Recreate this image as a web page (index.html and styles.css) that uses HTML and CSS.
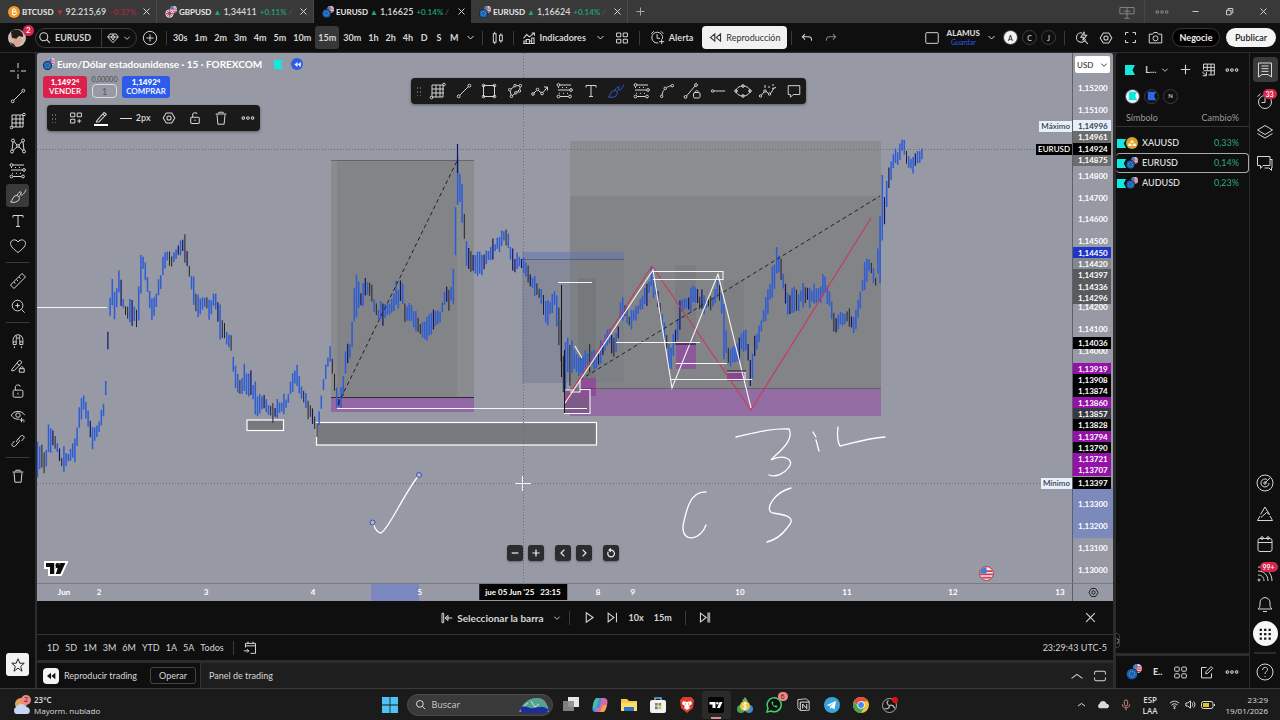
FILE: index.html
```html
<!DOCTYPE html>
<html lang="es">
<head>
<meta charset="utf-8">
<title>EURUSD · 15 · FOREXCOM</title>
<link rel="stylesheet" href="styles.css">
</head>
<body>
<svg class="sprite" aria-hidden="true">
  <defs>
    <symbol id="cross" viewBox="0 0 18 18"><path d="M9 1v5M9 12v5M1 9h5M12 9h5M8.500 9h1"/></symbol>
    <symbol id="trend" viewBox="0 0 18 18"><circle cx="3" cy="15" r="1.600"/><circle cx="15" cy="3" r="1.600"/><path d="M4.200 13.800 13.800 4.200"/></symbol>
    <symbol id="grid" viewBox="0 0 18 18"><path d="M3 3h11v12H3zM7 3v12M11 3v12M3 7h12M3 11h12"/><circle cx="2.500" cy="15.500" r="1.300"/><circle cx="15" cy="2.500" r="1.300"/></symbol>
    <symbol id="xabcd" viewBox="0 0 18 18"><circle cx="4" cy="3.500" r="1.500"/><circle cx="14" cy="3.500" r="1.500"/><circle cx="3" cy="14.500" r="1.500"/><circle cx="15" cy="14.500" r="1.500"/><circle cx="9" cy="9" r="1.300"/><path d="M4 5 3 13M14 5l1 8M5 4.500l3 3.500M13 4.500 10 8M4 13.500l4-3.500M14 13.500 10 10"/></symbol>
    <symbol id="fib" viewBox="0 0 18 18"><circle cx="2.500" cy="3" r="1.400"/><circle cx="15" cy="8" r="1.400"/><circle cx="2.500" cy="14.500" r="1.400"/><circle cx="14" cy="14.500" r="1.400"/><path d="M4 3h11M2 8h11.500M4 14.500h8.500M2 5.500h1M6 5.500h1M10 5.500h1M3 11.300h1M7 11.300h1M11 11.300h1"/></symbol>
    <symbol id="brush" viewBox="0 0 18 18"><path d="M1.500 15c2-1 2-6 5.500-6.500 2.500 0 4 2 3 4C9 15 5 16 1.500 15zM8 8.500C9 5 13 3.500 12 6c-.5 2-2 3.500-2 4M12 8c2 .5 4-3 5-5.500"/></symbol>
    <symbol id="tee" viewBox="0 0 18 18"><path d="M4 5.500V3.500h10v2M9 3.500v11M7 14.500h4"/></symbol>
    <symbol id="heart" viewBox="0 0 18 18"><path d="M9 15.500C5 12.500 1.500 9.500 1.500 6.500 1.500 2.500 7 1.500 9 5c2-3.500 7.500-2.500 7.500 1.500 0 3-3.500 6-7.500 9z"/></symbol>
    <symbol id="ruler" viewBox="0 0 18 18"><path d="M1.500 13 13 1.500 16.500 5 5 16.500zM5 10l1.500 1.500M7.500 7.500 9 9M10 5l1.500 1.500"/></symbol>
    <symbol id="zoomin" viewBox="0 0 18 18"><circle cx="8.500" cy="8.500" r="6"/><path d="M13 13l3.500 3.500M8.500 6v5M6 8.500h5"/></symbol>
    <symbol id="magnet" viewBox="0 0 18 18"><path d="M3.500 13V7.500a5.500 5.500 0 0 1 11 0V13h-3.500V7.500a2 2 0 0 0-4 0V13zM3.500 10H7M11 10h3.500M5 15v2M13 15v2M7 6V3M11 6V3"/></symbol>
    <symbol id="penlock" viewBox="0 0 18 18"><path d="M2 13 10 3c1-1 4 1 3 2.500L5 14l-3 .5zM8 6l3 2.500M10.500 12h5.500v4h-5.500zM11.500 12c0-3 3.500-3 3.500 0"/></symbol>
    <symbol id="lock" viewBox="0 0 18 18"><rect x="3.500" y="8" width="11" height="8" rx="1.500"/><path d="M6 8V4.500c0-3 5.500-3 5.500-.5M9 11v2"/></symbol>
    <symbol id="eye" viewBox="0 0 18 18"><path d="M1.500 8c3-5.500 12-5.500 15 0M1.500 8c2 4 6 5 9 4.500"/><circle cx="9" cy="8" r="2.500"/><path d="M13 11v5M11 13.500h5M15 16l1.500-1.500"/></symbol>
    <symbol id="link" viewBox="0 0 18 18"><path d="M8 10.500c-1-1-.5-2 0-2.500l4-4.500c2-2 5 .5 3.500 2.500L13 9M10 7.500c1 1 .5 2 0 2.500l-4 4.500c-2 2-5-.5-3.500-2.500L5 9"/></symbol>
    <symbol id="trash" viewBox="0 0 18 18"><path d="M3 4.500h12M6.500 4V2.500h5V4M4.500 5l1 11h7l1-11"/></symbol>
    <symbol id="star" viewBox="0 0 18 18"><path d="M9 2l2 5h5l-4 3.500L13.500 16 9 12.500 4.500 16 6 10.500 2 7h5z"/></symbol>
    <symbol id="search" viewBox="0 0 18 18"><circle cx="8" cy="8" r="5.500"/><path d="M12 12l4.500 4.500"/></symbol>
    <symbol id="diamond" viewBox="0 0 18 18"><path d="M4.500 3h9L17 7.500 9 16 1 7.500zM1 7.500h16M6.500 7.500 9 4l2.500 3.500L9 12z"/></symbol>
    <symbol id="chev" viewBox="0 0 18 18"><path d="M3 6l6 6 6-6"/></symbol>
    <symbol id="chevup" viewBox="0 0 18 18"><path d="M2 12l7-5 7 5"/></symbol>
    <symbol id="plusc" viewBox="0 0 18 18"><circle cx="9" cy="9" r="7.500"/><path d="M9 5v8M5 9h8"/></symbol>
    <symbol id="plus" viewBox="0 0 18 18"><path d="M9 2.500v13M2.500 9h13"/></symbol>
    <symbol id="minus" viewBox="0 0 18 18"><path d="M3 9h12"/></symbol>
    <symbol id="close" viewBox="0 0 18 18"><path d="M3 3l12 12M15 3 3 15"/></symbol>
    <symbol id="candles" viewBox="0 0 18 18"><path d="M3 3.500h3.500v11H3zM4.700 1v2.500M4.700 14.500V17M11 5.500h3.500v7H11zM12.700 3v2.500M12.700 12.500V15"/></symbol>
    <symbol id="indic" viewBox="0 0 18 18"><path d="M2 9.500l4-5 3.500 3L16 2.500M12.500 2.500H16V6M2.500 16v-3h3v3M5.500 16v-5h4v5M9.500 16v-3h3v3M12.500 16V9h3v7M1.500 16h15"/></symbol>
    <symbol id="squares" viewBox="0 0 18 18"><rect x="2" y="2.500" width="5.500" height="5" rx="1"/><rect x="10.500" y="2.500" width="5.500" height="5" rx="1"/><rect x="2" y="10.500" width="5.500" height="5" rx="1"/><rect x="10.500" y="10.500" width="5.500" height="5" rx="1"/></symbol>
    <symbol id="template" viewBox="0 0 18 18"><rect x="2" y="2.500" width="5.500" height="5" rx="1"/><rect x="10.500" y="2.500" width="5.500" height="5" rx="1"/><rect x="2" y="10.500" width="5.500" height="5" rx="1"/><path d="M13.200 10.500v5M10.700 13h5"/></symbol>
    <symbol id="alarm" viewBox="0 0 18 18"><path d="M10 15.500a6.500 6.500 0 1 1 5-5M8.500 5v5H12M1.500 4.500l3-3M13 1.500l3 3M14 11v6M11 14h6"/></symbol>
    <symbol id="rewind" viewBox="0 0 18 18"><path d="M8 4 2 9l6 5zM16 4l-6 5 6 5z"/></symbol>
    <symbol id="undo" viewBox="0 0 18 18"><path d="M6.500 4 3 7.500 6.500 11M3 7.500h8c3 0 4 2 4 5"/></symbol>
    <symbol id="redo" viewBox="0 0 18 18"><path d="M11.500 4 15 7.500 11.500 11M15 7.500H7c-3 0-4 2-4 5"/></symbol>
    <symbol id="box" viewBox="0 0 18 18"><rect x="2" y="3" width="14" height="12" rx="1"/></symbol>
    <symbol id="maxi" viewBox="0 0 18 18"><path d="M2 7V5q0-2 2-2h10q2 0 2 2v2M2 11v2q0 2 2 2h10q2 0 2-2v-2"/></symbol>
    <symbol id="flash" viewBox="0 0 18 18"><path d="M9 2.500a6 6 0 1 0 4.500 8M12.500 12.500l4 4M12 1 7.500 8H11l-1 4 5-6.500h-3.500z"/></symbol>
    <symbol id="gear" viewBox="0 0 18 18"><path d="M5.500 2.500h7L16.500 9l-4 6.500h-7L1.500 9z"/><circle cx="9" cy="9" r="2.700"/></symbol>
    <symbol id="full" viewBox="0 0 18 18"><path d="M3 6V3h3.500M11.500 3H15v3M15 12v3h-3.500M6.500 15H3v-3"/></symbol>
    <symbol id="camera" viewBox="0 0 18 18"><path d="M1.500 5h4L7 3h4l1.500 2h4v10.500h-15z"/><circle cx="9" cy="10" r="3"/></symbol>
    <symbol id="dots" viewBox="0 0 18 18"><circle cx="3" cy="9" r="1.700"/><circle cx="9" cy="9" r="1.700"/><circle cx="15" cy="9" r="1.700"/></symbol>
    <symbol id="pencil" viewBox="0 0 18 18"><path d="M3.500 14 13 3l3 2.500L6.500 15l-3.500.5zM11 5l3 3"/></symbol>
    <symbol id="rect" viewBox="0 0 18 18"><path d="M3.500 3.500h11v11h-11z"/><circle cx="3.500" cy="3.500" r="1.300"/><circle cx="14.500" cy="3.500" r="1.300"/><circle cx="3.500" cy="14.500" r="1.300"/><circle cx="14.500" cy="14.500" r="1.300"/></symbol>
    <symbol id="path" viewBox="0 0 18 18"><circle cx="9" cy="3" r="1.400"/><circle cx="15" cy="3" r="1.400"/><circle cx="3" cy="7.500" r="1.400"/><circle cx="14" cy="9" r="1.400"/><circle cx="5" cy="15" r="1.400"/><circle cx="10" cy="11" r="1.400"/><path d="M10.500 3H13.500M8 4 4.500 6.800M3.500 9l1.200 4.500M6 14l3-2M11.300 10.500l1.500-1M14.300 7.500l.5-3"/></symbol>
    <symbol id="zig" viewBox="0 0 18 18"><circle cx="2" cy="12" r="1.300"/><circle cx="6.500" cy="7.500" r="1.300"/><circle cx="11" cy="11.500" r="1.300"/><path d="M3 11l2.500-2.500M7.500 8.500l2.500 2M12 10.500 16.500 5M13 5h3.500v3.500"/></symbol>
    <symbol id="curve" viewBox="0 0 18 18"><circle cx="3" cy="15" r="1.400"/><circle cx="7" cy="6" r="1.400"/><circle cx="15" cy="3" r="1.400"/><path d="M3.500 13.500C4 10 5 8.500 6.300 7.300M8.500 5.300C10 4 12 3.500 13.500 3.200"/></symbol>
    <symbol id="trlock" viewBox="0 0 18 18"><circle cx="2.500" cy="15" r="1.400"/><circle cx="13" cy="3" r="1.400"/><path d="M3.500 14 12 4"/><rect x="10.500" y="10.500" width="6.500" height="5.500" rx="1.500"/><path d="M12 10.500c0-2.500 3.500-2.500 3.500 0"/></symbol>
    <symbol id="hray" viewBox="0 0 18 18"><circle cx="3" cy="9" r="1.400"/><path d="M4.500 9H17"/></symbol>
    <symbol id="ellipse" viewBox="0 0 18 18"><ellipse cx="9" cy="9" rx="7" ry="5"/><circle cx="2" cy="9" r="1.300"/><circle cx="16" cy="9" r="1.300"/><circle cx="9" cy="4" r="1.300"/><circle cx="9" cy="14" r="1.300"/></symbol>
    <symbol id="elliott" viewBox="0 0 18 18"><circle cx="1.500" cy="14" r="1.200"/><circle cx="6" cy="9" r="1.200"/><circle cx="10.500" cy="12" r="1.200"/><path d="M2.500 13 5 10M7 9.500l2.500 2M11.500 11.500 15 6M13 6.500l4-1M6 3v3M10 4v2M14 2v2"/></symbol>
    <symbol id="note" viewBox="0 0 18 18"><path d="M2.500 3h13v10H8l-3 3v-3H2.500z"/></symbol>
    <symbol id="calgo" viewBox="0 0 18 18"><path d="M3 9V4h12v12H9M3 7h12M6 2v3M12 2v3M1 13h6M5 11l2 2-2 2"/></symbol>
    <symbol id="cal" viewBox="0 0 18 18"><rect x="2" y="3.500" width="14" height="13" rx="2"/><path d="M2 7.500h14"/><circle cx="6" cy="3" r="1.300"/><circle cx="12" cy="3" r="1.300"/></symbol>
    <symbol id="play" viewBox="0 0 18 18"><path d="M4.500 2.500 14 9l-9.500 6.500z"/></symbol>
    <symbol id="step" viewBox="0 0 18 18"><path d="M3 3l8 6-8 6zM14.500 2.500v13"/></symbol>
    <symbol id="toend" viewBox="0 0 18 18"><path d="M2 3l8 6-8 6z"/><path class="solid" d="M11.500 2h4v14h-4z" opacity=".7"/></symbol>
    <symbol id="barsel" viewBox="0 0 18 18"><path d="M1.500 2h2.500v14H1.500zM6 9h11M10.500 5 6 9l4.500 4z"/></symbol>
    <symbol id="back" viewBox="0 0 18 18"><path d="M11.500 3 5.500 9l6 6"/></symbol>
    <symbol id="fwd" viewBox="0 0 18 18"><path d="M6.500 3l6 6-6 6"/></symbol>
    <symbol id="reset" viewBox="0 0 18 18"><path d="M4 7a6 6 0 1 0 5-3H5.500M8.500 1 5.500 4l3 3"/></symbol>
    <symbol id="list" viewBox="0 0 18 18"><path d="M2.500 2h13v14L12 13.500H6L2.500 16zM5.500 5h7M5.500 7.700h7M5.500 10.400h7"/></symbol>
    <symbol id="clock" viewBox="0 0 18 18"><circle cx="9" cy="10" r="6.500"/><path d="M9 6v4.500H5.500M1.500 4.500l3-2.500M13.500 2l3 2.500"/></symbol>
    <symbol id="layers" viewBox="0 0 18 18"><path d="M9 2.500 16.500 7 9 11.500 1.500 7zM1.500 10.500 9 15l7.500-4.500"/></symbol>
    <symbol id="chat" viewBox="0 0 18 18"><path d="M1.500 2.500h12.500v9H7l-2.500 3v-3h-3zM16 6v8h-.5v2.500L13 14H8.500M14 5.500h2.500"/></symbol>
    <symbol id="radar" viewBox="0 0 18 18"><circle cx="9" cy="9" r="8"/><path d="M13 9a4 4 0 1 1-2-3.500M9 9l5.500-5.500"/><circle cx="9" cy="9" r="1.200"/></symbol>
    <symbol id="hill" viewBox="0 0 18 18"><path d="M9 2l4.500 7.500-3-2L5 12.500M9 2 4.500 9.500M1.500 15.500h15l-2.500-4.500M1.500 15.500 4 11"/></symbol>
    <symbol id="feed" viewBox="0 0 18 18"><circle cx="3" cy="15" r="1"/><path d="M2 10c4 0 6 2.500 6 6M2 6c6 0 10 4 10 10M2 2c8 0 14 6 14 14"/></symbol>
    <symbol id="bell" viewBox="0 0 18 18"><path d="M2 14c2-1.500 2-3 2-6 0-3.500 2-5 5-5.500 3 .5 5 2 5 5.500 0 3 0 4.500 2 6zM7 16.500h4"/></symbol>
    <symbol id="help" viewBox="0 0 18 18"><circle cx="9" cy="9" r="8"/><path d="M6.500 7c0-3.500 5-3.500 5-.5 0 2-2.500 2-2.500 4.500M9 13v1"/></symbol>
    <symbol id="apps" viewBox="0 0 18 18"><path class="solid" d="M3 3h2.500v2.500H3zM8 3h2.500v2.500H8zM13 3h2.500v2.500H13zM3 8h2.500v2.500H3zM8 8h2.500v2.500H8zM13 8h2.500v2.500H13zM3 13h2.500v2.500H3zM8 13h2.500v2.500H8zM13 13h2.500v2.500H13z"/></symbol>
    <symbol id="table" viewBox="0 0 18 18"><path d="M3 9V2.500h13v13H9M3 6.500h13M3 10.500h13M7.500 2.500v8M12 2.500v13M6.500 12v4.500H2M1.500 12l5 4.500"/></symbol>
    <symbol id="edit" viewBox="0 0 18 18"><path d="M9 3H3v12.500h12V10M8 10.500l.5-2.500 6-6 2 2-6 6z"/></symbol>
    <symbol id="screens" viewBox="0 0 18 18"><path d="M1 4h16v7H1zM9 4v12M5 8h8M6 16h6"/></symbol>
    <symbol id="restore" viewBox="0 0 18 18"><path d="M3 6.500h9v9H3zM6 6V3h9.500v9H12"/></symbol>
    <symbol id="wifi" viewBox="0 0 18 18"><path d="M1.500 7c4-4.500 11-4.500 15 0M4 10c3-3 7-3 10 0M6.500 12.500c1.500-1.500 3.500-1.500 5 0"/><circle cx="9" cy="15" r="1"/></symbol>
    <symbol id="sound" viewBox="0 0 18 18"><path d="M1.500 6.500h3L9 3v12l-4.500-3.500h-3zM11.500 6c1.500 2 1.500 4 0 6M14 4c3 3 3 7 0 10"/></symbol>
    <symbol id="mic" viewBox="0 0 18 18"><rect x="6.500" y="1.500" width="5" height="9" rx="2.500"/><path d="M3.500 8c0 7 11 7 11 0M9 13.500V17"/></symbol>
    <symbol id="flag" viewBox="0 0 12 12"><path class="solid" d="M1 1h10L8.500 6 11 11H1z"/></symbol>
    <symbol id="rr" viewBox="0 0 18 18"><path class="solid" d="M9 4v10L3 9zM15.500 4v10l-6-5z"/></symbol>
    <symbol id="us" viewBox="0 0 16 16"><circle cx="8" cy="8" r="8" fill="#f2e9ec" stroke="none"/><path d="M1 5h14M0 9h16M2 13h12" stroke="#d33c52" stroke-width="2"/><path d="M8 0v8H0C0 3 4 0 8 0z" fill="#3f7ec9" stroke="none"/></symbol>
    <symbol id="pair" viewBox="0 0 16 16"><use href="#us" x="7" y="0" width="9" height="9"/><circle cx="6" cy="10" r="6" fill="#101418" stroke="none"/><circle cx="6" cy="10" r="5.300" fill="#1b62ae" stroke="none"/><circle cx="6" cy="10" r="2.800" stroke="#7fb8e8" stroke-dasharray="1 1.200"/></symbol>
    <symbol id="gbp" viewBox="0 0 16 16"><use href="#us" x="7" y="0" width="9" height="9"/><circle cx="6" cy="10" r="5.500" fill="#e8dfe6" stroke="none"/><path d="M6 5v10M1 10h10" stroke="#d83a50" stroke-width="2"/><path d="M2.500 6.500l7 7M9.500 6.500l-7 7" stroke="#3a68b0"/></symbol>
  </defs>
</svg>

<header class="tabs" role="tablist">
  <div class="tab"><svg class="coin" viewBox="0 0 16 16"><circle cx="8" cy="8" r="8" fill="#f09a2a"/><path d="M6 4v8M6 4.500h3c2 0 2 3 0 3H6h3.500c2.500 0 2.500 4 0 4H6M8 3v1M8 12v1" fill="none" stroke="#fff" stroke-width="1.300"/></svg><button class="tab-name" role="tab">BTCUSD</button><span class="down">▼</span><span>92.215,69</span><span class="chg neg">−0.37%</span><button class="x" aria-label="Cerrar"><svg class="i9"><use href="#close"/></svg></button></div>
  <div class="tab"><svg class="coin"><use href="#gbp"/></svg><button class="tab-name" role="tab">GBPUSD</button><span class="up">▲</span><span>1,34411</span><span class="chg pos">+0.11% <i>/</i></span><button class="x" aria-label="Cerrar"><svg class="i9"><use href="#close"/></svg></button></div>
  <div class="tab active"><svg class="coin"><use href="#pair"/></svg><button class="tab-name" role="tab" aria-selected="true">EURUSD</button><span class="up">▲</span><span>1,16625</span><span class="chg pos">+0.14% <i>/</i></span><button class="x" aria-label="Cerrar"><svg class="i9"><use href="#close"/></svg></button></div>
  <div class="tab"><svg class="coin"><use href="#pair"/></svg><button class="tab-name" role="tab">EURUSD</button><span class="up">▲</span><span>1,16624</span><span class="chg pos">+0.14% <i>/</i></span><button class="x" aria-label="Cerrar"><svg class="i9"><use href="#close"/></svg></button></div>
  <button class="newtab" aria-label="Nueva pestaña"><svg class="i11"><use href="#plus"/></svg></button>
  <div class="win">
    <button class="dim" aria-label="Pantallas"><svg class="i16"><use href="#screens"/></svg></button>
    <button class="dim edge" aria-label="Más"><svg class="i14"><use href="#dots"/></svg></button>
    <button aria-label="Minimizar"><svg class="i9"><use href="#minus"/></svg></button>
    <button aria-label="Restaurar"><svg class="i9"><use href="#restore"/></svg></button>
    <button aria-label="Cerrar ventana"><svg class="i9"><use href="#close"/></svg></button>
  </div>
</header>

<nav class="topbar">
  <button class="avatar" aria-label="Perfil"><svg viewBox="0 0 18 18"><circle cx="9" cy="9" r="9" fill="#c9bdb4"/><path d="M3 3c4-5 13-2 12 5l-4-1-3 3-4-1z" fill="#241c1a"/><path d="M5 9l4 1 3-2 2 4-4 5-5-2z" fill="#d9a58c"/><path d="M2 13l4 2 2 3-4-1z" fill="#402a26"/></svg><span class="badge">2</span></button>
  <div class="pill"><button class="sym"><svg class="i13"><use href="#search"/></svg>EURUSD</button><button class="src" aria-label="Fuente"><svg class="i12"><use href="#diamond"/></svg><svg class="i7"><use href="#chev"/></svg></button></div>
  <button class="tool" aria-label="Comparar"><svg class="i16"><use href="#plusc"/></svg></button>
  <span class="sep"></span>
  <div class="frames"><button>30s</button><button>1m</button><button>2m</button><button>3m</button><button>4m</button><button>5m</button><button>10m</button><button class="on">15m</button><button>30m</button><button>1h</button><button>2h</button><button>4h</button><button>D</button><button>S</button><button>M</button><button aria-label="Más intervalos"><svg class="i8"><use href="#chev"/></svg></button></div>
  <span class="sep"></span>
  <button class="tool" aria-label="Velas"><svg class="i14"><use href="#candles"/></svg></button>
  <span class="sep"></span>
  <button class="tool wide"><svg class="i14"><use href="#indic"/></svg>Indicadores</button>
  <button class="tool" aria-label="Favoritos"><svg class="i8"><use href="#chev"/></svg></button>
  <button class="tool" aria-label="Plantillas"><svg class="i14"><use href="#squares"/></svg></button>
  <span class="sep wider"></span>
  <button class="tool wide"><svg class="i15"><use href="#alarm"/></svg>Alerta</button>
  <button class="replay"><svg class="i13"><use href="#rewind"/></svg>Reproducción</button>
  <span class="sep"></span>
  <button class="tool" aria-label="Deshacer"><svg class="i14"><use href="#undo"/></svg></button>
  <button class="tool dim" aria-label="Rehacer"><svg class="i14"><use href="#redo"/></svg></button>
  <div class="right">
    <button class="tool" aria-label="Diseño"><svg class="i16"><use href="#box"/></svg></button>
    <button class="layout"><b>ALAMUS</b><span>Guardar</span></button>
    <button class="tool" aria-label="Diseños"><svg class="i8"><use href="#chev"/></svg></button>
    <button class="round lit">A</button><button class="round">C</button><button class="round">J</button>
    <span class="sep"></span>
    <button class="tool" aria-label="Búsqueda rápida"><svg class="i14"><use href="#flash"/></svg></button>
    <button class="tool" aria-label="Ajustes"><svg class="i14"><use href="#gear"/></svg></button>
    <button class="tool" aria-label="Pantalla completa"><svg class="i15"><use href="#full"/></svg></button>
    <button class="tool" aria-label="Captura"><svg class="i15"><use href="#camera"/></svg></button>
    <button class="cta dark">Negocie</button>
    <button class="cta">Publicar</button>
  </div>
</nav>

<div class="workspace">
  <aside class="tools">
    <button aria-label="Cruz"><svg class="i18"><use href="#cross"/></svg></button>
    <button aria-label="Línea"><svg class="i16"><use href="#trend"/></svg></button>
    <button aria-label="Gann"><svg class="i18"><use href="#grid"/></svg></button>
    <button aria-label="Patrones"><svg class="i18"><use href="#xabcd"/></svg></button>
    <button aria-label="Fibonacci"><svg class="i18"><use href="#fib"/></svg></button>
    <button class="on" aria-label="Pincel"><svg class="i18"><use href="#brush"/></svg></button>
    <button aria-label="Texto"><svg class="i18"><use href="#tee"/></svg></button>
    <button aria-label="Iconos"><svg class="i18"><use href="#heart"/></svg></button>
    <hr>
    <button aria-label="Regla"><svg class="i18"><use href="#ruler"/></svg></button>
    <button aria-label="Acercar"><svg class="i16"><use href="#zoomin"/></svg></button>
    <hr>
    <button aria-label="Imán"><svg class="i16"><use href="#magnet"/></svg></button>
    <button aria-label="Modo dibujo"><svg class="i16"><use href="#penlock"/></svg></button>
    <button aria-label="Bloquear"><svg class="i16"><use href="#lock"/></svg></button>
    <button aria-label="Ocultar"><svg class="i16"><use href="#eye"/></svg></button>
    <button aria-label="Vincular"><svg class="i16"><use href="#link"/></svg></button>
    <hr>
    <button aria-label="Eliminar"><svg class="i16"><use href="#trash"/></svg></button>
    <button class="fav" aria-label="Barra de favoritos"><svg class="i16"><use href="#star"/></svg></button>
  </aside>

  <main class="center">
    <section class="chart">
      <div class="canvas">
        <svg class="plot" viewBox="37 53 1035 530" preserveAspectRatio="none">
          <g class="zones">
            <rect x="331" y="160" width="143" height="237" fill="#8a8c90"/>
            <rect x="337" y="160" width="120" height="237" fill="#828487"/>
            <rect x="331" y="397" width="143" height="15" fill="#9468a4"/>
            <rect x="522" y="260" width="102" height="123" fill="#868999"/>
            <rect x="570" y="141" width="311" height="55" fill="#8b8d91"/>
            <rect x="570" y="196" width="311" height="193" fill="#828487"/>
            <rect x="522" y="252" width="102" height="8" fill="#5d72b4" opacity=".5"/>
            <rect x="570" y="260" width="54" height="123" fill="#7d8085"/>
            <rect x="578" y="278" width="18" height="105" fill="#76797c"/>
            <rect x="675" y="265" width="21" height="78" fill="#7b7d80"/>
            <rect x="724" y="280" width="20" height="95" fill="#7d7f83"/>
            <rect x="570" y="389" width="311" height="27" fill="#936ca3"/>
            <rect x="564" y="390" width="26" height="24" fill="#7f5a89"/>
            <rect x="580" y="378" width="16" height="18" fill="#8e4f96"/>
            <rect x="676" y="343" width="20" height="26" fill="#8d579b"/>
            <rect x="727" y="371" width="18" height="10" fill="#86478c"/>
            <path class="dark" d="M331 160.500h143M522 259.500h102M570 388.500h311" opacity=".3"/>
            <path class="dark" d="M331 397.500h143" opacity=".8"/>
            <rect class="out" x="316.500" y="422.500" width="280" height="22.500" fill="#797a80"/>
            <rect class="out" x="247" y="420" width="36.500" height="10.500" fill="#77787d"/>
          </g>
          <path class="dotted" d="M37 149.500h1035M37 483.500h1035M523.500 53v530"/>
          <g id="bars"></g>
          <path class="navy" d="M457.500 144v29"/>
          <path class="dash" d="M338 404 457 161M580 380 880 196"/>
          <path class="rose" d="M565 401 652 266 751 410 871 218"/>
          <path class="white" d="M37 307.500h70M337 408.500h250M558 282.500h34M616 342.500h84M676 363.500h51M670 379.500h82M564 413.500h26v-24h-10M564 390h10M652 271.500h71v8h-70M580 380v12h-10M727 372h18v8"/>
          <path class="white" d="M565 403 653 270 672 388 718 274 751 408M575 346l7 12"/>
          <path class="dark" d="M561.500 285v92M564.500 350v63M675 344h21M727 371h19"/>
          <g class="ink">
            <path d="M373 523c2 6 4 10 8 10 8-4 22-38 38-58"/>
            <path d="M736 437c18-4 35-9 53-8 6 12-12 24-18 31 12-6 24-1 18 7-4 6-13 11-20 8"/>
            <path d="M813 432l3 5M816 440l3 11M838 427c-1 8-1 14 2 19 10-2 27-8 45-9"/>
            <path d="M706 492c-16-1-20 19-23 34-1 18 18 14 23-1M791 488c-16 4-28 22-18 25 15 2 24 5 14 15-5 7-12 12-20 14"/>
          </g>
          <path class="white" d="M522.500 476v15M515 483.500h16"/>
          <g class="handles"><circle cx="372.500" cy="522.500" r="2.500"/><circle cx="419" cy="475" r="2.500"/></g>
        </svg>

        <div class="legend">
          <div class="title"><svg class="coin"><use href="#pair"/></svg><h1>Euro/Dólar estadounidense · 15 · FOREXCOM</h1><svg class="cyan i11"><use href="#flag"/></svg><span class="rw"><svg class="i9"><use href="#rr"/></svg></span></div>
          <div class="trade">
            <button class="sell"><b>1,1492<sup>4</sup></b>VENDER</button>
            <label class="lot"><span>0,00000</span><input value="1" aria-label="Lotes"></label>
            <button class="buy"><b>1,1492<sup>4</sup></b>COMPRAR</button>
          </div>
          <div class="float style-bar">
            <span class="grip"></span>
            <button aria-label="Plantilla"><svg class="i14"><use href="#template"/></svg></button>
            <button class="color" aria-label="Color"><svg class="i14"><use href="#pencil"/></svg></button>
            <button class="px"><i></i>2px</button>
            <button aria-label="Configuración"><svg class="i14"><use href="#gear"/></svg></button>
            <button aria-label="Bloquear"><svg class="i14"><use href="#lock"/></svg></button>
            <button aria-label="Eliminar"><svg class="i16"><use href="#trash"/></svg></button>
            <button aria-label="Más"><svg class="i14"><use href="#dots"/></svg></button>
          </div>
        </div>

        <div class="float fav-bar">
          <span class="grip"></span>
          <button aria-label="Gann"><svg class="i18"><use href="#grid"/></svg></button>
          <button aria-label="Línea"><svg class="i16"><use href="#trend"/></svg></button>
          <button aria-label="Rectángulo"><svg class="i18"><use href="#rect"/></svg></button>
          <button aria-label="Trazado"><svg class="i16"><use href="#path"/></svg></button>
          <button aria-label="Polilínea"><svg class="i18"><use href="#zig"/></svg></button>
          <button aria-label="Fibonacci"><svg class="i18"><use href="#fib"/></svg></button>
          <button aria-label="Texto"><svg class="i18"><use href="#tee"/></svg></button>
          <button class="blue" aria-label="Pincel"><svg class="i18"><use href="#brush"/></svg></button>
          <button aria-label="Extensión"><svg class="i18"><use href="#fib"/></svg></button>
          <button aria-label="Curva"><svg class="i16"><use href="#curve"/></svg></button>
          <button aria-label="Información"><svg class="i18"><use href="#trlock"/></svg></button>
          <button aria-label="Rayo"><svg class="i16"><use href="#hray"/></svg></button>
          <button aria-label="Elipse"><svg class="i18"><use href="#ellipse"/></svg></button>
          <button aria-label="Elliott"><svg class="i18"><use href="#elliott"/></svg></button>
          <button aria-label="Nota"><svg class="i16"><use href="#note"/></svg></button>
        </div>

        <div class="steer">
          <button aria-label="Alejar"><svg class="i10"><use href="#minus"/></svg></button><button aria-label="Acercar"><svg class="i10"><use href="#plus"/></svg></button>
          <button class="gap" aria-label="Atrás"><svg class="i10"><use href="#back"/></svg></button><button aria-label="Adelante"><svg class="i10"><use href="#fwd"/></svg></button>
          <button class="gap" aria-label="Restablecer"><svg class="i10"><use href="#reset"/></svg></button>
        </div>
        <svg class="logo" viewBox="0 0 24 15"><path d="M1 1h22l-6 13H5V7H1z" fill="#0b0b0b" stroke="#fff" stroke-width="2"/><path d="M11 1v13M11.500 3h4M13 7l-2 6" stroke="#fff" stroke-width="1.500" fill="none"/><circle cx="13.500" cy="4" r="2" fill="#0b0b0b"/></svg>
        <svg class="event"><use href="#us"/></svg>
        <div class="side-tags" id="tags"></div>
      </div>
      <div class="prices"><div class="currency"><select aria-label="Moneda"><option>USD</option></select><svg class="i7"><use href="#chev"/></svg></div><div id="prices"></div></div>
      <div class="times" id="times"></div>
      <button class="axis-gear" aria-label="Ajustes de escala"><svg class="i11"><use href="#gear"/></svg></button>
    </section>

    <section class="replay-bar">
      <div class="group">
        <button class="pick"><svg class="i12"><use href="#barsel"/></svg>Seleccionar la barra<svg class="i7 late"><use href="#chev"/></svg></button>
        <span class="sep"></span>
        <button aria-label="Reproducir"><svg class="i13"><use href="#play"/></svg></button>
        <button aria-label="Avanzar"><svg class="i13"><use href="#step"/></svg></button>
        <button>10x</button><button>15m</button>
        <span class="sep"></span>
        <button aria-label="Ir al final"><svg class="i13"><use href="#toend"/></svg></button>
      </div>
      <button class="quit" aria-label="Salir"><svg class="i13"><use href="#close"/></svg></button>
    </section>

    <section class="ranges">
      <button>1D</button><button>5D</button><button>1M</button><button>3M</button><button>6M</button><button>YTD</button><button>1A</button><button>5A</button><button>Todos</button>
      <span class="sep"></span>
      <button aria-label="Ir a fecha"><svg class="i15"><use href="#calgo"/></svg></button>
      <time>23:29:43 UTC-5</time>
    </section>

    <section class="bottom">
      <div class="rep"><span class="rep-ico"><svg class="i12"><use href="#rr"/></svg></span>Reproducir trading<button class="operar">Operar</button></div>
      <button class="panel-name">Panel de trading</button>
      <div class="bottom-right"><button aria-label="Desplegar"><svg class="i14"><use href="#chevup"/></svg></button><button aria-label="Maximizar"><svg class="i14"><use href="#maxi"/></svg></button></div>
    </section>
  </main>

  <aside class="watch">
    <div class="watch-head"><svg class="cyan i12"><use href="#flag"/></svg><button class="list-name">L...<svg class="i7"><use href="#chev"/></svg></button><button aria-label="Añadir"><svg class="i13"><use href="#plus"/></svg></button><button aria-label="Tabla"><svg class="i15"><use href="#table"/></svg></button><button aria-label="Más"><svg class="i14"><use href="#dots"/></svg></button></div>
    <div class="chips"><button class="lit" aria-label="Lista celeste"><svg class="cyan i10"><use href="#flag"/></svg></button><button aria-label="Lista azul"><svg class="azure i10"><use href="#flag"/></svg></button><button>N</button></div>
    <table>
      <thead><tr><th>Símbolo</th><th>Cambio%</th></tr></thead>
      <tbody>
        <tr><td><div class="cell"><svg class="cyan i11"><use href="#flag"/></svg><svg class="coin" viewBox="0 0 16 16"><circle cx="8" cy="8" r="8" fill="#d9a32b"/><path d="M5.500 7.500 6.500 4.500h3l1 3zM2.500 12l1-3.500h3.500l1 3.500zM8.500 12l1-3.500H13l1 3.500z" fill="#fff3cf"/></svg>XAUUSD</div></td><td>0,33%</td></tr>
        <tr class="sel"><td><div class="cell"><svg class="cyan i11"><use href="#flag"/></svg><svg class="coin"><use href="#pair"/></svg>EURUSD</div></td><td>0,14%</td></tr>
        <tr><td><div class="cell"><svg class="cyan i11"><use href="#flag"/></svg><svg class="coin"><use href="#pair"/></svg>AUDUSD</div></td><td>0,23%</td></tr>
      </tbody>
    </table>
    <div class="detail"><svg class="coin big"><use href="#pair"/></svg><b>E..</b><button aria-label="Vista"><svg class="i15"><use href="#squares"/></svg></button><button aria-label="Editar"><svg class="i15"><use href="#edit"/></svg></button><button aria-label="Más"><svg class="i14"><use href="#dots"/></svg></button></div>
    <button class="fold" aria-label="Plegar"><svg class="i7"><use href="#fwd"/></svg></button>
  </aside>

  <aside class="rail">
    <button class="on" aria-label="Lista"><svg class="i18"><use href="#list"/></svg></button>
    <button aria-label="Alertas"><svg class="i18"><use href="#clock"/></svg><span class="badge">33</span></button>
    <button aria-label="Objetos"><svg class="i18"><use href="#layers"/></svg></button>
    <button aria-label="Chats"><svg class="i18"><use href="#chat"/></svg></button>
    <button class="push" aria-label="Screener"><svg class="i18"><use href="#radar"/></svg></button>
    <button aria-label="Pine"><svg class="i18"><use href="#hill"/></svg></button>
    <button aria-label="Calendario"><svg class="i18"><use href="#cal"/></svg></button>
    <button aria-label="Noticias"><svg class="i18"><use href="#feed"/></svg><span class="badge long">99+</span></button>
    <button aria-label="Notificaciones"><svg class="i18"><use href="#bell"/></svg></button>
    <button class="apps" aria-label="Productos"><svg class="i16"><use href="#apps"/></svg></button>
    <hr>
    <button aria-label="Ayuda"><svg class="i18"><use href="#help"/></svg></button>
  </aside>
</div>

<footer class="taskbar">
  <button class="weather"><svg viewBox="0 0 20 20"><circle cx="9" cy="9" r="6" fill="#e0a25a"/><path d="M4 19a4 4 0 0 1 0-7c2-4 9-4 10 0 5 0 5 7 1 7z" fill="#c6d6f4"/><circle cx="14" cy="5" r="5" fill="#ef8585"/></svg><span class="num">2</span><span class="two"><b>23°C</b>Mayorm. nublado</span></button>
  <div class="apps-row">
    <button aria-label="Inicio"><svg viewBox="0 0 16 16"><path d="M0 0h7.600v7.600H0zM8.400 0H16v7.600H8.400zM0 8.400h7.600V16H0zM8.400 8.400H16V16H8.400z" fill="#4cc2f5"/></svg></button>
    <label class="find"><svg class="i11"><use href="#search"/></svg><input placeholder="Buscar" aria-label="Buscar"><svg class="art" viewBox="0 0 30 16"><path d="M0 15C3 7 9 1 18 1s11 8 12 14z" fill="#6c93b8"/><path d="M4 8c6-7 14-8 18-5s6 6 7 9H3z" fill="#50a58c"/><path d="M1 11c6-4 8 1 14 0s9-3 15 2l-3 3H3z" fill="#1b2e9a"/><path d="M12 4l4 6 4-3M5 9l4-3" stroke="#e7d4ee" fill="none"/></svg></label>
    <button aria-label="Vista de tareas"><svg viewBox="0 0 16 16"><rect x="5" y="0" width="11" height="10" fill="#e6e6e6"/><rect x="0" y="4" width="11" height="10" fill="#8b8b8b" opacity=".9"/></svg></button>
    <button aria-label="Copilot"><svg viewBox="0 0 16 16"><path d="M5 1h5c2 0 2 3 3 5H9L6 15H3c-3 0-3-4-2-7 1-4 2-7 4-7z" fill="#3b93e6"/><path d="M11 15H6c-2 0-2-3-3-4h4l3-10h2c4 0 4 4 3 7-1 4-2 7-4 7z" fill="#d769a8"/><path d="M1 8c1-4 2-7 4-7h2L4 11H1z" fill="#46c29a"/><path d="M11 15c2 0 3-3 4-7h-4l-3 7z" fill="#efa344"/></svg></button>
    <button aria-label="Explorador"><svg viewBox="0 0 16 16"><path d="M0 2h6l2 2h8v10H0z" fill="#f6c84c"/><path d="M0 6h16v8H0z" fill="#fbdc6f"/><path d="M3 10h10v4H3z" fill="#2c76bd"/></svg></button>
    <button aria-label="Tienda"><svg viewBox="0 0 16 16"><path d="M5 4V1h6v3" fill="none" stroke="#5cb7ec" stroke-width="1.500"/><rect y="3" width="16" height="13" rx="2" fill="#f1f1f1"/><path d="M5 6h2.700v2.700H5z" fill="#e45b3c"/><path d="M8.500 6h2.700v2.700H8.500z" fill="#5da83c"/><path d="M5 9.500h2.700v2.700H5z" fill="#2f8ad8"/><path d="M8.500 9.500h2.700v2.700H8.500z" fill="#e7b32e"/></svg></button>
    <button aria-label="Brave"><svg viewBox="0 0 16 16"><path d="M4 0h8l3 3-1 8-6 5-6-5-1-8z" fill="#e23a2b"/><path d="M4 4l4 1 4-1 1 3-3 2 1 2-3 2-3-2 1-2-3-2z" fill="#fff"/><path d="M6 7h1M9 7h1" stroke="#e23a2b"/></svg></button>
    <button class="open" aria-label="TradingView"><svg viewBox="0 0 16 16"><rect width="16" height="16" rx="2" fill="#050505"/><path d="M1.500 5h6v6H4.500V7.500h-3zM10.500 7.500l1-2.500h3l-2.700 6H9z" fill="#fff"/><circle cx="9.300" cy="6.200" r="1.200" fill="#fff"/></svg></button>
    <button aria-label="MetaTrader"><svg viewBox="0 0 16 16"><circle cx="4" cy="12" r="4" fill="#4aa35b"/><circle cx="12" cy="12" r="4" fill="#3c8dc6"/><circle cx="8" cy="9" r="5" fill="#e9c64a"/><path d="M8 0l3 4H5z" fill="#5eb35d"/><path d="M10 7c-3-2-5 1-2 2s1 4-2 2M8 5v8" stroke="#fff" fill="none"/></svg></button>
    <button class="wa" aria-label="WhatsApp"><svg viewBox="0 0 16 16"><path d="M1 15l1-4a7 7 0 1 1 3 3z" fill="#111" stroke="#3fd267" stroke-width="1.500"/><path d="M5.500 5c0 3 2.500 5.500 5.500 5.500l.5-1.500-2-.8-.8.8C7.500 8.500 7 7.500 6.800 6.800l.7-.7L7 4.500z" fill="#3fd267"/></svg><span class="num">6</span></button>
    <button aria-label="Notion"><svg class="small" viewBox="0 0 16 16"><path d="M1 2l10-1 4 3v11l-11 .5L1 12z" fill="#1a1a1a" stroke="#eee"/><path d="M4 5h11M4 5v10M7 13V7.500l5 5.500V7.500" stroke="#eee" fill="none" stroke-width="1.200"/></svg></button>
    <button aria-label="Telegram"><svg viewBox="0 0 16 16"><circle cx="8" cy="8" r="8" fill="#37a5dc"/><path d="M3 8l9-4-1.500 8.500-3-2L6 12V9.500L10 6 5 9z" fill="#fff"/></svg></button>
    <button aria-label="Chrome"><svg viewBox="0 0 16 16"><circle cx="8" cy="8" r="8" fill="#f0c340"/><path d="M1 4.200A8 8 0 0 1 15 4.200H8L5 9z" fill="#df4b3c"/><path d="M1 4.200A8 8 0 0 0 8 16l3.500-6H5z" fill="#45a355"/><circle cx="8" cy="8" r="3.700" fill="#fff"/><circle cx="8" cy="8" r="2.900" fill="#4286ee"/></svg></button>
    <button aria-label="OBS"><svg viewBox="0 0 16 16"><circle cx="7.500" cy="8.500" r="7" fill="#161616" stroke="#aaa"/><path d="M7.500 8.500c-3-1-3-4-1-5M7.500 8.500c3-1 5 1 5 3M7.500 8.500c0 3-3 4-5 3" fill="none" stroke="#bbb" stroke-width="1.300"/><circle cx="13" cy="3" r="3" fill="#e11010"/></svg></button>
  </div>
  <div class="tray">
    <svg class="i9"><use href="#chevup"/></svg>
    <svg class="cloud" viewBox="0 0 14 10"><path d="M3 9.500a3 3 0 0 1 0-5.500c1-4 7-4 8 0 4 0 4 5.500 0 5.500z" fill="#d9d9d9"/></svg>
    <svg class="i12 mic"><use href="#mic"/></svg>
    <span class="lang">ESP<br>LAA</span>
    <span class="net"><svg class="i11"><use href="#wifi"/></svg><svg class="i11"><use href="#sound"/></svg><svg class="bat" viewBox="0 0 14 8"><rect x=".5" y=".5" width="11.500" height="7" rx="2" fill="none" stroke="#ddd"/><path d="M2 2h6v4H2z" fill="#e3bf2c"/><path d="M13.500 3v2" stroke="#ddd"/></svg></span>
    <span class="date">23:29<br>19/01/2026</span>
  </div>
</footer>
<script src="chart.js"></script>
</body>
</html>
```
FILE: styles.css
```css
* { box-sizing: border-box; }
html, body { height: 100%; }
body {
  margin: 0;
  display: flex;
  flex-direction: column;
  background: #2c2c2c;
  color: #d6d6d6;
  font: 600 9px/12px Lato, "Open Sans", sans-serif;
  overflow: hidden;
}
button, input, select { font: inherit; color: inherit; background: none; border: 0; padding: 0; margin: 0; }
button { display: flex; align-items: center; justify-content: center; gap: 4px; white-space: nowrap; }
svg { flex: none; fill: none; stroke: currentColor; stroke-width: 1.1; display: block; }
.apps-row button svg, .weather svg, .avatar svg, .art, .cloud, .coin, .logo, .event, .bat { stroke: none; stroke-width: 1; }
.solid { fill: currentColor; stroke: none; }
.sprite { position: absolute; width: 0; height: 0; }
.i7 { width: 8px; height: 8px; stroke-width: 2; }
.i8 { width: 9px; height: 9px; stroke-width: 2; }
.i9 { width: 9px; height: 9px; stroke-width: 2; }
.i10 { width: 10px; height: 10px; stroke-width: 2.2; }
.i11 { width: 11px; height: 11px; stroke-width: 1.6; }
.i12 { width: 12px; height: 12px; stroke-width: 1.5; }
.i13 { width: 13px; height: 13px; stroke-width: 1.5; }
.i14 { width: 14px; height: 14px; stroke-width: 1.3; }
.i15 { width: 15px; height: 15px; stroke-width: 1.2; }
.i16 { width: 16px; height: 16px; }
.i18 { width: 18px; height: 18px; stroke-width: 1; }
.coin { width: 12px; height: 12px; }
.cyan { color: #12e8e2; }
.azure { color: #2f66e8; }
.dim { color: #858585; }
.sep { width: 1px; height: 14px; background: #3a3a3a; margin: 0 8px; flex: none; }
.badge { background: #d9254c; color: #fff; border-radius: 8px; font-size: 8px; line-height: 11px; padding: 0 3px; position: absolute; }

/* window tabs */
.tabs { display: flex; height: 23px; flex: none; background: #393939; }
.tab { width: 157px; display: flex; align-items: center; padding: 0 4px 0 8px; gap: 2px; border-right: 1px solid #4a4a4a; }
.tab.active { background: #0f0f0f; border: 0; }
.tab-name { font-weight: 700; font-size: 8px; color: #e8e8e8; }
.up { color: #1fa67a; font-size: 8px; }
.down { color: #c8274a; font-size: 8px; }
.chg { flex: 1; white-space: nowrap; font-size: 8px; padding-left: 1px; }
.chg i { color: #555; }
.pos { color: #1fa67a; }
.neg { color: #b02545; }
.x { width: 12px; }
.newtab { width: 24px; color: #aaa; }
.win { margin-left: auto; display: flex; color: #ccc; }
.win button { width: 34px; }
.win .edge { border-left: 1px solid #484848; }

/* toolbar */
.topbar { display: flex; align-items: center; height: 29px; flex: none; background: #0f0f0f; padding: 0 4px 0 8px; }
.avatar { position: relative; width: 18px; height: 18px; margin-right: 9px; }
.avatar svg { width: 18px; height: 18px; }
.avatar .badge { left: 15px; top: -4px; }
.pill { display: flex; height: 20px; border: 1px solid #3c3c3c; border-radius: 10px; flex: none; }
.sym { width: 66px; font-weight: 700; border-right: 1px solid #3c3c3c; padding-right: 8px; }
.src { width: 34px; }
.tool { padding: 0 5px; height: 24px; flex: none; }
.tool.wide { gap: 4px; font-weight: 700; }
.topbar .sep { margin: 0 3px; }
.topbar .wider { margin: 0 5px; }
.frames { display: flex; flex: none; }
.frames button { height: 23px; padding: 0 3px; margin-right: 1px; border-radius: 3px; font-weight: 700; min-width: 14px; }
.frames .on { background: #383838; }
.replay { background: #f1f1f1; color: #333; border-radius: 4px; height: 23px; width: 85px; margin: 0 1px 0 4px; font-weight: 400; flex: none; }
.right { margin-left: auto; display: flex; align-items: center; }
.layout { flex-direction: column; gap: 0; line-height: 9px; padding: 0 2px; }
.layout b { font-size: 8px; }
.layout span { color: #2c5bee; font-size: 7px; font-weight: 400; line-height: 8px; }
.round { width: 15px; height: 15px; border: 1px solid #3c3c3c; border-radius: 50%; font-size: 7px; margin: 0 2px; }
.right .sep { margin: 0 5px 0 6px; }
.lit { background: #f4f4f4; color: #222; }
.cta { height: 19px; border-radius: 10px; background: #f4f4f4; color: #222; width: 50px; margin-left: 6px; }
.cta.dark { background: #000; color: #eee; border: 1px solid #363636; font-weight: 700; margin-left: 4px; width: 48px; }

/* workspace */
.workspace { flex: 1; min-height: 0; display: flex; gap: 2px; padding-top: 1px; }
.tools { width: 35px; display: flex; flex-direction: column; align-items: center; background: #0f0f0f; padding: 5px 0 11px; }
.tools button { width: 23px; height: 23px; margin: 1px 0; border-radius: 3px; }
.tools .on { background: #3a3a3a; }
.tools hr { width: 24px; border: 0; border-top: 1px solid #3a3a3a; margin: 4px 0 5px; }
.tools .fav { margin-top: auto; background: #f2f2f2; color: #222; }
.center { flex: 1; min-width: 0; display: flex; flex-direction: column; }
.chart { flex: 1; min-height: 0; display: grid; grid-template: minmax(0, 1fr) 18px / minmax(0, 1fr) 41px; background: #979aa4; color: #fff; border-radius: 3px 3px 0 0; overflow: hidden; }
.canvas { position: relative; overflow: hidden; }
.plot { position: absolute; inset: 0; width: 100%; height: 100%; stroke: none; }
.white { stroke: #f5f5f7; stroke-width: 1.1; }
.ink { stroke: #fff; stroke-width: 1.3; stroke-linecap: round; }
.dark { stroke: #17181c; stroke-width: 1; }
.rose { stroke: #c93a58; stroke-width: 1.1; }
.dash { stroke: #202124; stroke-width: 1; stroke-dasharray: 4 3; }
.dotted { stroke: #676a72; stroke-width: 1; stroke-dasharray: 1 2; }
.out { stroke: #fff; stroke-width: 1.2; }
.handles { fill: #aeb5d0; stroke: #3d55a8; stroke-width: 1; }
.bull { stroke: #2c5cd6; stroke-width: 1.5; }
.navy { stroke: #10146c; stroke-width: 1.2; }
.bear { stroke: #202226; stroke-width: 1; }

.legend { position: absolute; left: 6px; top: 4px; }
.title { display: flex; align-items: center; height: 14px; gap: 2px; }
.title h1 { margin: 0 9px 0 0; font-size: 10px; font-weight: 700; line-height: 14px; }
.rw { background: #2f5be8; border-radius: 50%; width: 12px; height: 12px; display: grid; place-items: center; margin-left: 5px; }
.trade { display: flex; gap: 5px; margin-top: 4px; align-items: flex-end; font-size: 8px; }
.trade button { flex-direction: column; gap: 0; height: 22px; border-radius: 3px; line-height: 9px; }
.trade b { font-size: 8px; font-weight: 900; }
.trade sup { font-size: 6px; line-height: 6px; vertical-align: 2px; }
.sell { background: #dc1f4b; width: 44px; }
.buy { background: #2d5ced; width: 48px; }
.lot { width: 25px; color: #43464e; text-align: center; display: flex; flex-direction: column; align-items: center; font-size: 7px; line-height: 9px; font-weight: 400; }
.lot input { width: 25px; height: 14px; border: 1px solid #dcdde2; border-radius: 4px; text-align: center; font-size: 9px; color: #55585f; }
.float { display: flex; align-items: center; background: #1a1a1b; color: #d5d5d5; border-radius: 4px; height: 26px; box-shadow: 0 1px 3px #0006; }
.grip { width: 6px; height: 10px; background: radial-gradient(circle, #666 1px, transparent 1px) 0 0 / 3px 4px; }
.style-bar { margin: 7px 0 0 4px; width: 213px; padding: 0 5px 0 4px; justify-content: space-between; }
.color { border-bottom: 2px solid #fff; }
.px i { width: 12px; border-top: 1px solid #ddd; }
.fav-bar { position: absolute; left: 374px; top: 25px; width: 395px; padding: 0 3px 0 5px; justify-content: space-between; }
.fav-bar button { width: 18px; }
.fav-bar .blue { color: #3358d4; }
.steer { position: absolute; left: 0; right: 0; bottom: 22px; padding-left: 17px; display: flex; justify-content: center; gap: 5px; }
.steer button { width: 16px; height: 16px; border-radius: 3px; background: #2b2c2f; color: #eee; box-shadow: 0 1px 2px #0005; }
.steer .gap { margin-left: 6px; }
.logo { position: absolute; left: 7px; bottom: 7px; width: 24px; height: 15px; }
.event { position: absolute; left: 91%; bottom: 2px; width: 15px; height: 15px; border: 1px solid #d63651; border-radius: 50%; }
.side-tags span { position: absolute; right: 0; height: 11px; line-height: 11px; margin-top: -5px; padding: 0 2px; background: #e6f0fa; color: #39404c; font-size: 8px; }
.side-tags .black { background: #000; color: #fff; }

.prices { position: relative; border-left: 1px solid #5d6068; background: linear-gradient(#7c89bb, #7c89bb) 0 434px / 100% 51px no-repeat; overflow: hidden; }
.prices > div > span { position: absolute; left: 0; right: 2px; height: 12px; line-height: 12px; margin-top: -6px; padding-left: 5px; font-size: 8px; font-weight: 700; }
.prices .grey { background: #6b6c6e; }
.prices .mid { background: #85878d; }
.prices .dgrey { background: #585a5e; }
.prices .slate { background: #363843; }
.prices .black { background: #000; }
.prices .pale { background: #e6f0fa; color: #39404c; }
.prices .royal { background: #1f35c8; }
.prices .violet { background: #9512a8; }
.currency { position: relative; z-index: 1; margin: 3px 3px 0 2px; height: 17px; background: #fff; color: #222; border-radius: 2px; display: flex; align-items: center; padding: 0 2px; font-size: 8px; font-weight: 400; }
.currency select { flex: 1; min-width: 0; appearance: none; }
.times { position: relative; border-top: 1px solid #777a84; background: linear-gradient(#7b87bf, #7b87bf) 334px 0 / 48px 100% no-repeat; overflow: hidden; font-size: 8px; font-weight: 700; }
.times span { position: absolute; translate: -50% 0; line-height: 17px; white-space: pre; }
.times .now { background: #050505; height: 16px; padding: 0 6px; }
.axis-gear { border-left: 1px solid #5d6068; border-top: 1px solid #777a84; color: #222; }

.replay-bar { display: flex; align-items: center; height: 34px; background: #0f0f0f; border-bottom: 1px solid #333; padding-right: 16px; }
.group { flex: 1; display: flex; align-items: center; justify-content: center; padding-left: 32px; font-weight: 700; }
.group button { margin: 0 5px; }
.group .pick { font-size: 10px; margin-right: 0; }
.late { margin-left: 5px; }
.ranges { display: flex; align-items: center; height: 25px; background: #0f0f0f; padding: 0 6px 0 7px; font-weight: 400; }
.ranges button { padding: 0 3px; }
.ranges time { margin-left: auto; }
.ranges .sep { margin: 0 6px; }
.bottom { display: flex; align-items: center; margin-top: 3px; height: 25px; background: #1e1e1e; font-weight: 400; }
.rep { background: #0f0f0f; display: flex; align-items: center; height: 100%; width: 164px; padding-left: 6px; gap: 5px; border-right: 1px solid #333; }
.rep-ico { width: 16px; height: 16px; border-radius: 4px; background: #f4f4f4; color: #111; display: grid; place-items: center; }
.operar { border: 1px solid #444; border-radius: 3px; height: 17px; width: 46px; margin: 0 4px 0 auto; }
.panel-name { margin-left: 8px; }
.bottom-right { margin-left: auto; display: flex; gap: 9px; padding-right: 6px; }

/* watchlist */
.watch { position: relative; width: 133px; background: #0f0f0f; display: flex; flex-direction: column; border-radius: 3px 0 0 0; margin-left: 1px; }
.watch-head { display: flex; align-items: center; height: 33px; padding: 0 10px 0 8px; justify-content: space-between; font-weight: 700; }
.list-name { gap: 5px; }
.chips { display: flex; gap: 4px; height: 20px; padding-left: 9px; align-items: center; }
.chips button { width: 15px; height: 15px; border-radius: 50%; border: 1px solid #3c3c3c; font-size: 6px; }
table { border-collapse: separate; border-spacing: 0; width: 100%; }
th { font-weight: 400; color: #9a9a9a; text-align: left; height: 21px; padding: 4px 9px 0 10px; border-bottom: 1px solid #333; }
th:last-child { text-align: right; padding: 4px 10px 0 0; }
tbody::before { content: ""; display: block; height: 6px; }
td { height: 20px; padding: 0; color: #dcdcdc; border: 1px solid transparent; border-width: 1px 0; font-weight: 600; }
td:last-child { text-align: right; padding-right: 10px; color: #2aa877; font-weight: 400; }
.cell { display: flex; align-items: center; gap: 4px; }
.cell .coin { margin-left: -5px; }
.sel td { border: 1px solid #aaa; }
.sel td:first-child { border-right: 0; border-left: 0; border-radius: 4px 0 0 4px; }
.sel td:last-child { border-left: 0; border-radius: 0 4px 4px 0; padding-right: 9px; }
.detail { margin-top: auto; height: 35px; border-top: 3px solid #2c2c2c; display: flex; align-items: center; justify-content: space-between; padding: 0 10px; }
.big { width: 16px; height: 16px; }
.fold { position: absolute; left: -1px; bottom: 40px; width: 5px; height: 15px; border: 1px solid #3c3c3c; border-radius: 0 3px 3px 0; overflow: hidden; }

.rail { width: 30px; background: #0f0f0f; display: flex; flex-direction: column; align-items: center; padding: 2px 0 1px; margin-left: -1px; }
.rail button { position: relative; width: 25px; height: 25px; margin: 2px 0 4px; border-radius: 4px; flex: none; }
.rail .on { background: #3a3a3a; }
.rail .badge { left: 10px; top: 1px; padding: 0 3px; font-size: 7px; line-height: 10px; }
.rail .long { left: 7px; }
.rail .push { margin-top: auto; }
.rail button.push ~ button { margin: 2px 0 3px; }
.rail .apps { background: #f6f6f6; color: #111; border-radius: 50%; }
.rail hr { width: 22px; border: 0; border-top: 2px solid #2c2c2c; margin: 3px 0; }

/* taskbar */
.taskbar { height: 32px; flex: none; display: grid; grid-template-columns: 1fr auto 1fr; align-items: center; background: #1b1b1b; border-top: 1px solid #3a3a3a; font: 400 8px/11px "Open Sans", sans-serif; color: #ddd; }
.weather { position: relative; justify-self: start; padding-left: 12px; gap: 2px; }
.weather svg { width: 20px; height: 20px; }
.num { position: absolute; font-size: 7px; line-height: 9px; color: #40131a; left: 24px; top: 1px; }
.two { display: flex; flex-direction: column; align-items: flex-start; }
.two b { font-weight: 600; }
.apps-row { display: flex; align-items: center; }
.apps-row button { position: relative; width: 29px; height: 28px; }
.apps-row button svg { width: 16px; height: 16px; }
.apps-row button .small { width: 13px; height: 13px; }
.open { background: linear-gradient(#e08a92, #e08a92) 50% 100% / 10px 2px no-repeat, #2a2a2a; border-radius: 3px; }
.wa .num { left: 18px; top: 1px; background: #ef8585; border-radius: 5px; width: 10px; text-align: center; }
.find { display: flex; align-items: center; width: 146px; height: 22px; margin: 0 4px 0 2px; background: #3a3a3a; border: 1px solid #4b4b4b; border-radius: 11px; padding: 0 3px 0 7px; gap: 6px; font-size: 9px; }
.find input { flex: 1; min-width: 0; }
.find input::placeholder { color: #ccc; }
.art { width: 30px; height: 16px; }
.tray { justify-self: end; display: flex; align-items: center; gap: 11px; padding-right: 12px; text-align: right; }
.cloud { width: 12px; height: 9px; }
.mic { color: #c98a72; }
.lang { text-align: center; font-weight: 600; }
.net { display: flex; align-items: center; gap: 5px; }
.bat { width: 14px; height: 8px; }
```
FILE: chart.js
```js
// Price envelope: x, high, low
const env = [37,440,470,41,445,470,45,455,473,49,425,452,55,433,448,62,455,470,70,450,463,76,436,455,79,408,430,84,392,410,88,410,428,93,430,447,98,425,438,103,405,420,106,370,395,107,335,360,110,300,320,113,272,310,115,290,320,119,273,290,122,290,308,126,305,320,131,300,328,134,300,320,137,308,340,140,255,305,142,242,268,146,268,292,149,285,305,152,302,320,156,290,310,160,275,295,163,258,275,167,250,262,172,256,266,178,248,256,184,232,250,187,250,264,191,275,290,195,285,308,199,300,314,205,295,308,210,300,320,215,285,308,220,310,335,225,322,345,231,335,355,235,365,385,240,380,400,245,365,395,250,368,395,255,388,412,258,395,420,262,393,408,268,402,415,274,410,418,280,402,414,288,398,404,291,375,392,297,368,385,302,388,400,308,398,418,313,410,425,317,425,440,321,395,412,325,365,380,330,345,365,333,360,385,336,385,405,339,398,406,343,380,398,346,335,370,351,340,362,354,280,325,358,275,305,361,290,312,366,278,296,370,282,298,374,295,310,378,310,322,383,303,318,390,305,313,395,290,308,402,278,305,405,300,322,412,305,322,418,318,335,424,320,340,430,312,335,435,310,330,440,310,325,445,285,305,450,290,312,454,250,305,457,160,210,460,170,205,463,185,235,466,240,270,471,250,272,476,255,275,482,255,275,487,250,265,494,245,255,500,235,245,505,227,240,509,237,250,514,260,275,519,258,268,524,258,270,530,270,290,536,280,295,541,290,302,545,300,325,550,300,315,555,290,305,558,300,340,561,320,380,564,350,400,567,330,385,570,340,390,574,345,370,580,355,375,586,350,370,592,350,368,598,355,368,603,340,355,609,328,340,613,340,358,618,325,345,621,296,315,625,305,320,629,315,325,636,308,320,641,295,310,647,285,305,652,265,290,656,282,300,660,300,320,666,325,345,670,350,380,674,330,350,678,315,340,682,296,315,688,298,310,694,285,300,700,295,308,706,300,308,713,298,308,717,280,300,721,285,305,725,310,370,729,350,370,735,342,362,740,340,358,745,320,345,749,345,370,751,370,405,754,340,365,760,320,340,765,300,325,771,280,300,776,248,285,779,250,272,784,275,300,788,295,312,796,292,312,804,282,305,812,290,302,820,288,298,824,265,295,830,292,310,834,315,335,841,315,325,848,310,325,855,315,335,860,290,315,865,262,280,870,260,272,876,275,290,880,200,290,882,155,240,885,195,222,889,165,190,893,150,170,898,148,165,903,135,152,907,155,168,912,160,172,917,152,165,923,147,157];

let seed = 11;
const rnd = () => (seed = (seed * 16807) % 2147483647) / 2147483647;
const paths = { bull: "", navy: "", bear: "" };
let k = 0, prev = 455;
for (let x = 37.5; x < 923; x += 2.2) {
  while (k + 3 < env.length - 3 && env[k + 3] < x) k += 3;
  const t = Math.min(1, (x - env[k]) / (env[k + 3] - env[k]));
  const hi = env[k + 1] + (env[k + 4] - env[k + 1]) * t;
  const lo = env[k + 2] + (env[k + 5] - env[k + 2]) * t;
  const mid = (hi + lo) / 2, span = lo - hi;
  const spike = rnd() < 0.25 ? 7 : 0;
  const a = hi + span * 0.4 * rnd() - 2 - spike * rnd();
  const b = lo - span * 0.4 * rnd() + 2 + spike * rnd();
  const r = rnd();
  const kind = mid < prev - 1 ? (r < 0.88 ? "bull" : "navy") : mid > prev + 1 ? (r < 0.35 ? "bear" : r < 0.55 ? "navy" : "bull") : (r < 0.65 ? "bull" : r < 0.82 ? "navy" : "bear");
  paths[kind] += `M${x.toFixed(1)} ${a.toFixed(1)}V${b.toFixed(1)}`;
  prev = mid;
}
document.getElementById("bars").innerHTML = Object.entries(paths).map(([c, d]) => `<path class="${c}" d="${d}"/>`).join("");

const pct = y => ((y - 53) / 530 * 100).toFixed(2) + "%";
const prices = [["1,15200",88],["1,15100",110],["1,14996",126,"pale"],["1,14961",137,"grey"],["1,14875",160,"grey"],["1,14924",149,"black"],["1,14800",176],["1,14700",198],["1,14600",219],["1,14500",241],["1,14450",253,"royal"],["1,14200",307],["1,14420",264,"mid"],["1,14397",275,"dgrey"],["1,14336",287,"dgrey"],["1,14296",298,"dgrey"],["1,14100",329],["1,14000",351],["1,14036",343,"black"],["1,13919",369,"violet"],["1,13908",380,"black"],["1,13874",391,"black"],["1,13860",403,"violet"],["1,13857",414,"slate"],["1,13828",425,"black"],["1,13794",437,"violet"],["1,13790",448,"black"],["1,13721",459,"violet"],["1,13707",470,"violet"],["1,13397",483,"black"],["1,13300",504],["1,13200",526],["1,13100",548],["1,13000",570]];
document.getElementById("prices").innerHTML = prices.map(([t, y, c]) => `<span class="${c || ""}" style="top:${pct(y)}">${t}</span>`).join("");
document.getElementById("tags").innerHTML = [["Máximo",126,""],["EURUSD",149,"black"],["Mínimo",483,""]].map(([t, y, c]) => `<span class="${c}" style="top:${pct(y)}">${t}</span>`).join("");
const times = [["Jun",64],["2",99],["3",206],["4",313],["5",420],["jue 05 Jun '25   23:15",523,"now"],["8",598],["9",633],["10",740],["11",847],["12",953],["13",1060]];
document.getElementById("times").innerHTML = times.map(([t, x, c]) => `<span class="${c || ""}" style="left:${((x - 37) / 1035 * 100).toFixed(2)}%">${t}</span>`).join("");
```
